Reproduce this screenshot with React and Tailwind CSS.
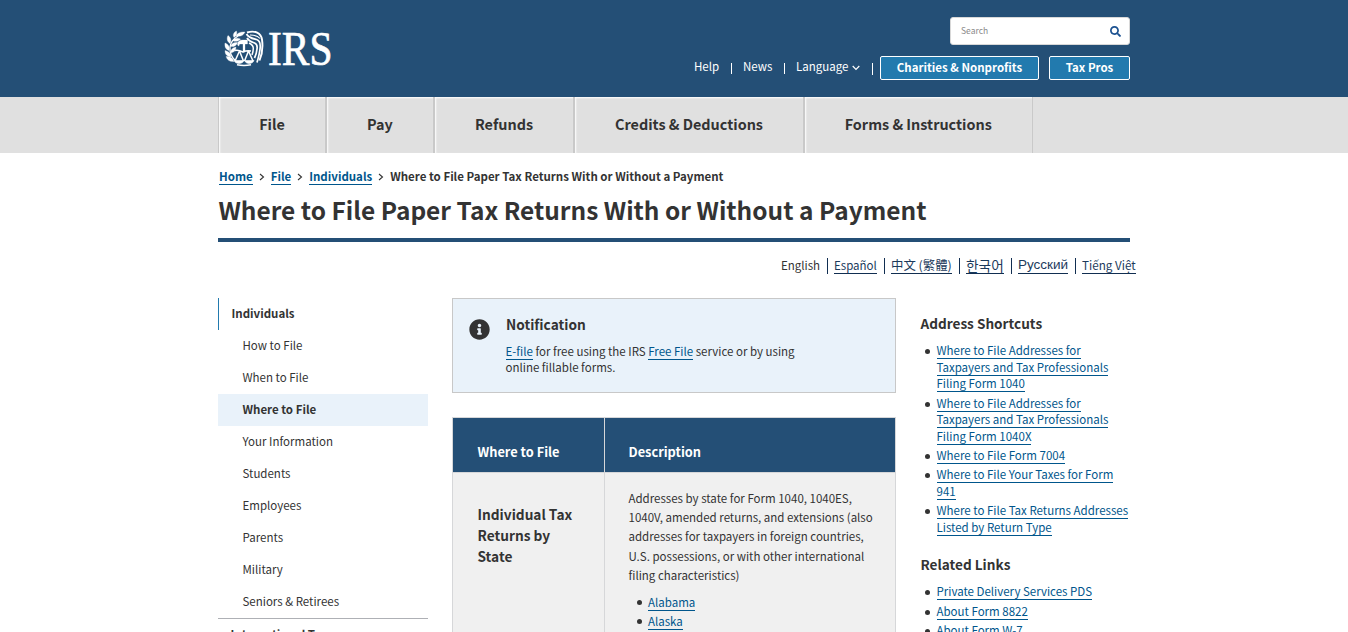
import React from 'react';
import { FaInfoCircle, FaSearch } from 'react-icons/fa';

function Logo() {
  return (
    <svg viewBox="0 0 120 40" className="h-10 w-[120px] overflow-visible" fill="none" stroke="#fff" role="img" aria-label="IRS">
      {/* laurel branch */}
      <path d="M12 33C7 29 5.500 24 6 19c.6-4 3-8 8-11" strokeWidth="1.300" />
      <g fill="#fff" stroke="#fff" strokeWidth=".3">
        <path d="M12 8c1-3 5-4.500 9-4-1.500 3.500-5 5-9 4Z" />
        <path d="M10 9.500C8.500 7 9.500 4.500 12.500 3c.8 3 0 5-2.500 6.500Z" />
        <path d="M8.500 12.500c2-2.500 5-3 8-1.500-2 2.500-5 3-8 1.500Z" />
        <path d="M6 15.500C3 13.500 2.500 10.500 4 7.500c3 2 3.500 5 2 8Z" />
        <path d="M6.500 18.500c1-3 3.500-4.500 7-4-1.500 3.500-3.500 4.500-7 4Z" />
        <path d="M5 22.500c-3.500-1-4.500-4-4-7.500 3.500 1.500 5 4 4 7.500Z" />
        <path d="M6.500 25c0-3.500 2-5.500 5.500-6 0 3.500-2 5.500-5.500 6Z" />
        <path d="M7 29c-4-.5-6-2.500-6-6.500 4 1 6 3 6 6.500Z" />
        <path d="M10 33.500c-4 .5-7-1.500-8-5 4-.5 7 1.500 8 5Z" />
        {/* eagle head and neck */}
        <path d="M13.500 16.500c0-3 2-4.500 5-4.500h5v4h-2.500v8h-2v-8h-2.500c-1 0-1.500.5-1.500 2-.8-.3-1.500-.8-1.500-1.500Z" />
      </g>
      {/* wing */}
      <path d="M23 4.500c8-2.500 14 .5 15 7 1 7 .5 14-2.500 21" strokeWidth="1.900" />
      <path d="M22.500 6c2 4 6 4.500 10 5.500 3.500 1 4 4 3.700 8-.3 4-1.200 8-3.200 15" strokeWidth="1.700" />
      <path d="M23 10c2 3.500 5 4 7.500 5 2.500 1 3 3 2.500 6-.3 3-1 6-2.500 9" strokeWidth="1.700" />
      <path d="M25 15c3 1.500 4.500 2.500 4.300 5.500 0 2-.4 4-1.300 6.500" strokeWidth="1.500" />
      <path d="M26 7c4 0 8 1 10 3.500" strokeWidth="1.200" />
      {/* scales */}
      <g strokeWidth="1.500">
        <path d="M11 22.500c3-1 5 0 8 1.500 3-1.500 5-1.500 8-1M15.500 23 11 33M15.500 23l4 10M24.500 23l-4 10M24.500 23l4.500 10" />
        <path d="M10 32.500h10c-1.500 4-8.500 4-10 0ZM20.500 32.500h9.500c-1.500 4-8 4-9.500 0Z" fill="#fff" strokeWidth=".6" />
        <path d="M13 36.800c4 .9 10 .9 14 0" />
      </g>
      <text x="44" y="36.500" fill="#fff" stroke="#fff" strokeWidth=".7" fontSize="48" textLength="64.500" lengthAdjust="spacingAndGlyphs" className="font-['Liberation_Serif',serif]">IRS</text>
    </svg>
  );
}

function Link({ children }) {
  return <a href="#" className="border-b border-[#00568c] text-[#00568c]">{children}</a>;
}

function NavItem({ width, children }) {
  return (
    <a href="#" className={`flex items-center justify-center border-x border-[#c9c9c9] pb-[2px] text-[14.4px] font-bold shadow-[inset_1px_1px_2px_#fff] ${width}`}>
      {children}
    </a>
  );
}

function Chevron() {
  return (
    <svg viewBox="0 0 6 8" className="mx-[6px] mt-[1px] h-2 w-1.5" fill="none" stroke="#333" strokeWidth="1.1">
      <path d="m1 1 3.500 3L1 7" />
    </svg>
  );
}

function BulletList({ items, className }) {
  return (
    <ul className={className}>
      {items.map((t, i) => (
        <li key={i} className="flex">
          <span className="mr-[6.500px] mt-[7px] size-[5px] shrink-0 rounded-full bg-[#333]" />
          <span><Link>{t}</Link></span>
        </li>
      ))}
    </ul>
  );
}

const shortcuts = [
  'Where to File Addresses for Taxpayers and Tax Professionals Filing Form 1040',
  'Where to File Addresses for Taxpayers and Tax Professionals Filing Form 1040X',
  'Where to File Form 7004',
  'Where to File Your Taxes for Form 941',
  'Where to File Tax Returns Addresses Listed by Return Type',
];

const sideItems = ['How to File', 'When to File', 'Where to File', 'Your Information', 'Students', 'Employees', 'Parents', 'Military', 'Seniors & Retirees'];

const languages = [
  { label: 'Español', width: 'w-[43px]' },
  { label: '中文 (繁體)', width: 'w-[61px]', font: 'text-[12.4px]' },
  { label: '한국어', width: 'w-[38px]', font: "text-[13.7px] font-['Noto_Sans_CJK_KR',sans-serif]" },
  { label: 'Русский', width: 'w-[50px]', font: "text-[13.5px] font-['Liberation_Sans',sans-serif]" },
  { label: 'Tiếng Việt', width: 'w-[54px]', font: 'text-[11.7px]' },
];

export default function App() {
  return (
    <div className="h-[632px] overflow-hidden bg-white font-['Noto_Sans_CJK_SC',sans-serif] text-[11.5px] leading-4 text-[#333]">
      <header className="h-[97px] bg-[#244f76]">
        <div className="mx-auto flex h-full w-[912px] justify-between">
          <div className="pl-1.5 pt-[28px]"><Logo /></div>
          <div className="flex flex-col items-end pt-[17px]">
            <div className="flex h-7 w-[180px] items-center justify-between rounded-[3px] border border-[#d8d8d8] bg-white pb-px pl-[10px] pr-2">
              <span className="pb-px text-[8.5px] text-[#8a8a8a]">Search</span>
              <FaSearch className="mt-px size-[11px] text-[#1c5291]" />
            </div>
            <div className="mt-[11px] flex h-6 items-center text-white">
              <a href="#" className="w-[37px] pb-[5px]">Help</a>
              <span className="mr-[11px] h-[11px] w-px bg-white" />
              <a href="#" className="w-[41px] pb-[5px]">News</a>
              <span className="mr-[11px] h-[11px] w-px bg-white" />
              <a href="#" className="flex w-[76px] items-center pb-[5px]">
                Language
                <svg viewBox="0 0 8 6" className="ml-[4px] mt-[5px] h-1.5 w-2" fill="none" stroke="#fff" strokeWidth="1.200"><path d="m.7 1 3.300 3.500L7.300 1" /></svg>
              </a>
              <span className="mr-[7px] mt-[1px] h-3 w-px bg-white" />
              <a href="#" className="mr-2.5 flex h-6 w-[159px] items-center justify-center rounded-[2px] border border-white bg-[#227aae] pb-[3px] font-bold">Charities &amp; Nonprofits</a>
              <a href="#" className="flex h-6 w-[81px] items-center justify-center rounded-[2px] border border-white bg-[#227aae] pb-[3px] font-bold">Tax Pros</a>
            </div>
          </div>
        </div>
      </header>

      <nav className="h-14 bg-[#e0e0e0]">
        <div className="mx-auto flex h-full w-[912px]">
          <NavItem width="w-[108px]">File</NavItem>
          <NavItem width="w-[108px]">Pay</NavItem>
          <NavItem width="w-[140px]">Refunds</NavItem>
          <NavItem width="w-[230px]">Credits &amp; Deductions</NavItem>
          <NavItem width="w-[228.5px]">Forms &amp; Instructions</NavItem>
        </div>
      </nav>

      <main className="mx-auto w-[912px]">
        <div className="mt-[15px] flex h-4 items-center pl-[1px] font-bold">
          <Link>Home</Link><Chevron />
          <Link>File</Link><Chevron />
          <Link>Individuals</Link><Chevron />
          <span>Where to File Paper Tax Returns With or Without a Payment</span>
        </div>
        <h1 className="mt-[10px] h-12 border-b-4 border-[#244f76] pl-[0.5px] text-[24.44px] font-bold leading-[32px]">Where to File Paper Tax Returns With or Without a Payment</h1>

        <div className="-mr-[7px] mt-4 flex h-4 justify-end whitespace-nowrap text-[#1b3a5c]">
          <span className="w-[46px] leading-[14px] text-[#333]">English</span>
          {languages.map((l) => (
            <span key={l.label} className="flex h-4 border-l border-[#112e51] pl-[6px] pr-[7px] last:pr-[1px]">
              <a href="#" className={`h-4 border-b border-[#112e51] leading-[14px] ${l.width} ${l.font || ''}`}>{l.label}</a>
            </span>
          ))}
        </div>

        <div className="mt-6 flex">
          <aside className="w-[210px] shrink-0">
            <div className="flex h-8 items-center border-l border-[#227aae] pb-[3px] pl-[12.5px] font-bold">Individuals</div>
            {sideItems.map((t) => (
              <div key={t} className={`flex h-8 items-center pb-[3px] pl-[24.5px] ${t === 'Where to File' ? 'bg-[#e9f2fa] font-bold' : ''}`}>{t}</div>
            ))}
            <div className="flex h-8 items-center border-t border-[#aeb0b5] pb-px pl-[12.5px] font-bold">International Taxpayers</div>
          </aside>

          <div className="ml-6 w-[444px] shrink-0">
            <section className="flex h-[95px] border border-[#c8c8c8] bg-[#e9f2fa] pl-4">
              <FaInfoCircle className="mt-5 size-[21px]" />
              <div className="ml-4 w-[310px] pt-[17px]">
                <h2 className="text-[13.7px] font-bold leading-4">Notification</h2>
                <p className="-ml-[0.5px] mt-[11px] leading-4"><Link>E-file</Link> for free using the IRS <Link>Free File</Link> service or by using<br />online fillable forms.</p>
              </div>
            </section>

            <div className="mt-6 grid w-[444px] grid-cols-[152px_291px] border-l border-t border-[#d6d7d9] [&>div]:border-r [&>div]:border-[#d6d7d9]">
              <div className="h-[55px] border-b bg-[#244f76] pl-[24.5px] pt-[26px] text-[12.8px] font-bold text-white">Where to File</div>
              <div className="h-[55px] border-b bg-[#244f76] pl-[23.5px] pt-[26px] text-[12.8px] font-bold text-white">Description</div>
              <div className="h-80 bg-[#f0f0f0] pl-[24.5px] pt-[31px] text-[13.7px] font-bold leading-[21px]">Individual Tax<br />Returns by<br />State</div>
              <div className="h-80 bg-[#f0f0f0] pl-[23.5px] pt-[16px] leading-[19.200px]">
                <p>Addresses by state for Form 1040, 1040ES,<br />1040V, amended returns, and extensions (also<br />addresses for taxpayers in foreign countries,<br />U.S. possessions, or with other international<br />filing characteristics)</p>
                <BulletList className="mt-2 pl-[8px]" items={['Alabama', 'Alaska']} />
              </div>
            </div>
          </div>

          <aside className="ml-6 w-[212px] shrink-0">
            <h2 className="pl-[0.5px] pt-[17px] text-[13.6px] font-bold leading-4">Address Shortcuts</h2>
            <BulletList className="ml-[5px] mt-[11.200px] leading-[16.640px] [&>li]:mb-[2.560px]" items={shortcuts} />
            <h2 className="mt-[21px] pl-[0.5px] text-[13.6px] font-bold leading-4">Related Links</h2>
            <BulletList className="ml-[5px] mt-[11px] leading-[16.640px] [&>li]:mb-[2.560px]" items={['Private Delivery Services PDS', 'About Form 8822', 'About Form W-7']} />
          </aside>
        </div>
      </main>
    </div>
  );
}
